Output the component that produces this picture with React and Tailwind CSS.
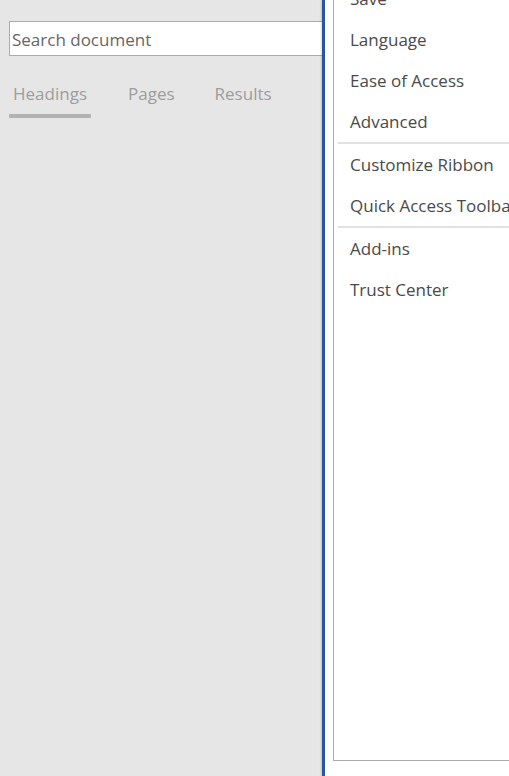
const menuGroups = [
  ["Save", "Language", "Ease of Access", "Advanced"],
  ["Customize Ribbon", "Quick Access Toolbar"],
  ["Add-ins", "Trust Center"],
];

export default function App() {
  return (
    <div className="flex h-[776px] w-[509px] overflow-hidden bg-[#e6e6e6] font-['Open_Sans',sans-serif]">
      {/* navigation pane */}
      <div className="w-[322px] shrink-0 pl-[9px] pt-[21px]">
        <div className="h-[35px] w-[320px] border border-[#ababab] bg-white pl-[2px] pt-[1px] text-[17px] leading-[33px] text-[#666]">
          Search document
        </div>
        <div className="mt-[23px] flex text-[17px] text-[#9d9d9d]">
          <div className="flex w-[82px] flex-col">
            <span className="pl-[4px] leading-[30px]">Headings</span>
            <div className="mt-[5px] h-[4px] bg-[#b3b3b3]" />
          </div>
          <span className="ml-[37px] leading-[30px]">Pages</span>
          <span className="ml-[40px] leading-[30px]">Results</span>
        </div>
      </div>

      {/* options dialog edge */}
      <div className="relative z-10 h-full w-[3px] shrink-0 bg-[#2b579a] shadow-[-1px_0_2px_rgba(0,0,0,0.15)]" />

      <div className="h-full flex-1 bg-white pl-[8px]">
        <div className="flex h-[761px] flex-col overflow-hidden border-b border-l border-[#ababab] pl-[4px]">
          <div className="-mt-[22px] flex flex-col">
            {menuGroups.map((group, gi) => (
              <div key={gi} className="flex flex-col">
                {gi > 0 && <div className="h-[2px] bg-[#e1e1e1]" />}
                {group.map((item) => (
                  <div
                    key={item}
                    className="h-[41px] whitespace-nowrap pl-[12px] text-[17px] leading-[41px] text-[#4a4a4a]"
                  >
                    {item}
                  </div>
                ))}
              </div>
            ))}
          </div>
        </div>
      </div>
    </div>
  );
}
